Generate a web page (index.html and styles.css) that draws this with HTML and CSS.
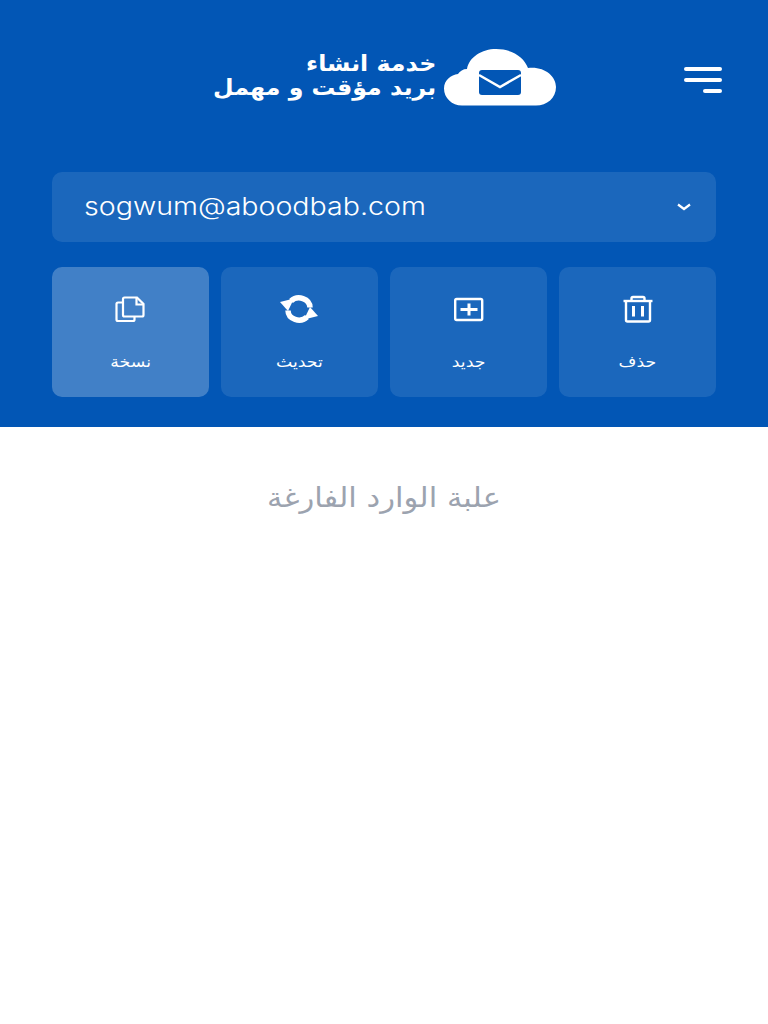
FILE: index.html
```html
<!DOCTYPE html>
<html lang="ar" dir="rtl">
<head>
    <meta charset="UTF-8">
    <meta name="viewport" content="width=device-width, initial-scale=1.0">
    <title>بريد مؤقت</title>
    <link rel="stylesheet" href="styles.css">
</head>
<body>
    <header class="hero">
        <div class="topbar">
            <button class="menu-btn" aria-label="menu">
                <span class="menu-line"></span>
                <span class="menu-line"></span>
                <span class="menu-line short"></span>
            </button>
            <div class="logo">
                <svg class="logo-cloud" width="112" height="57" viewBox="0 0 112 57">
                    <path fill="#fff" d="M18 56.500C8 56.500 0 49 0 39.500C0 31 7 26 14 25C16 22 19 20 23 20C25 8 38 0 52 0C68 0 80 8 84 19C100 17 112 27 112 38C112 49 103 56.500 92 56.500Z"/>
                    <rect x="35" y="21" width="42" height="25" rx="3" fill="#0256b5"/>
                    <path d="M35 26L56 38L77 26" fill="none" stroke="#fff" stroke-width="2.500"/>
                </svg>
                <div class="logo-text">
                    <div>خدمة انشاء</div>
                    <div>بريد مؤقت و مهمل</div>
                </div>
            </div>
        </div>

        <div class="email-box">
            <svg class="chevron" width="16" height="10" viewBox="0 0 16 10">
                <path d="M2 2.500L8 7L14 2.500" fill="none" stroke="#fff" stroke-width="2.200"/>
            </svg>
            <span class="email" dir="ltr">sogwum@aboodbab.com</span>
        </div>

        <div class="actions">
            <div class="action">
                <svg class="action-icon" width="30" height="30" viewBox="0 0 30 30" fill="none" stroke="#fff" stroke-width="2.400">
                    <path d="M0.500 6H29.500"/>
                    <path d="M8.500 6V3.500C8.500 2.500 9 2 10 2H20C21 2 21.500 2.500 21.500 3.500V6"/>
                    <path d="M3 6V25C3 26 3.500 26.500 4.500 26.500H25.500C26.500 26.500 27 26 27 25V6"/>
                    <path d="M10.500 11V21.500M19.500 11V21.500" stroke-width="3"/>
                </svg>
                <span class="action-label">حذف</span>
            </div>
            <div class="action">
                <svg class="action-icon" width="30" height="30" viewBox="0 0 30 30" fill="none" stroke="#fff" stroke-width="2.400">
                    <rect x="1.200" y="4" width="27" height="21" rx="1.500"/>
                    <path d="M15 8.500V20.500M6.500 14.500H23.500" stroke-width="3"/>
                </svg>
                <span class="action-label">جديد</span>
            </div>
            <div class="action">
                <svg class="action-icon" width="38" height="30" viewBox="0 0 38 30">
                    <path d="M11 6A11 9.800 0 0 1 30 12.500M27 22A11 9.800 0 0 1 8 15.500" fill="none" stroke="#fff" stroke-width="5.500"/>
                    <path fill="#fff" d="M0 7L14 3.500L8 16Z"/>
                    <path fill="#fff" d="M38 21L24 24.500L30 12Z"/>
                </svg>
                <span class="action-label">تحديث</span>
            </div>
            <div class="action active">
                <svg class="action-icon" width="30" height="30" viewBox="0 0 30 30" fill="none" stroke="#fff" stroke-width="2.200">
                    <path d="M8 7.500H3C2 7.500 1.500 8 1.500 9V24.500C1.500 25.500 2 26 3 26H18C19 26 19.500 25.500 19.500 24.500V21.500"/>
                    <path d="M9.500 2.500H22L28.500 9V20C28.500 21 28 21.500 27 21.500H9.500C8.500 21.500 8 21 8 20V4C8 3 8.500 2.500 9.500 2.500Z"/>
                    <path d="M21.500 3V9.500H28"/>
                </svg>
                <span class="action-label">نسخة</span>
            </div>
        </div>
    </header>
    <main class="inbox">
        <p class="inbox-empty">علبة الوارد الفارغة</p>
    </main>
</body>
</html>
```
FILE: styles.css
```css
* {
    box-sizing: border-box;
}
body {
    margin: 0;
    background: #fff;
    font-family: "DejaVu Sans", sans-serif;
}
.hero {
    height: 427px;
    padding: 49px 52px 30px;
    background-color: #0256b5;
    color: #fff;
}
.topbar {
    display: flex;
    align-items: flex-start;
    height: 123px;
}
.menu-btn {
    display: flex;
    flex-direction: column;
    gap: 7px;
    width: 38px;
    margin: 18px -6px 0 0;
    padding: 0;
    border: none;
    background: none;
}
.menu-line {
    display: block;
    width: 100%;
    height: 4px;
    border-radius: 2px;
    background-color: #fff;
}
.menu-line.short {
    width: 19px;
}
.logo {
    display: flex;
    gap: 8px;
    margin-right: 128px;
}
.logo-text {
    padding-top: 3px;
    font-size: 22px;
    font-weight: bold;
    line-height: 24px;
    transform: scaleX(1.077);
    transform-origin: right;
}
.email-box {
    display: flex;
    align-items: center;
    justify-content: space-between;
    height: 70px;
    padding: 0 24px 0 32px;
    border-radius: 10px;
    background-color: rgba(255,255,255,0.1);
}
.email {
    margin-bottom: 2px;
    font-family: Inter, sans-serif;
    font-size: 24px;
    font-weight: 300;
    transform: scaleX(1.19);
    transform-origin: left;
}
.actions {
    display: grid;
    grid-template-columns: repeat(4, 1fr);
    gap: 12.500px;
    margin-top: 25px;
}
.action {
    display: flex;
    flex-direction: column;
    align-items: center;
    height: 130px;
    padding-top: 28px;
    border-radius: 10px;
    background-color: rgba(255,255,255,0.1);
}
.action.active {
    background-color: rgba(255,255,255,0.25);
}
.action-label {
    margin-top: 28px;
    font-size: 15px;
    transform: scaleX(1.15);
}
.inbox-empty {
    margin: 54px 0 0;
    color: #9ca3af;
    font-size: 28px;
    text-align: center;
    transform: scaleX(1.094);
}
```
